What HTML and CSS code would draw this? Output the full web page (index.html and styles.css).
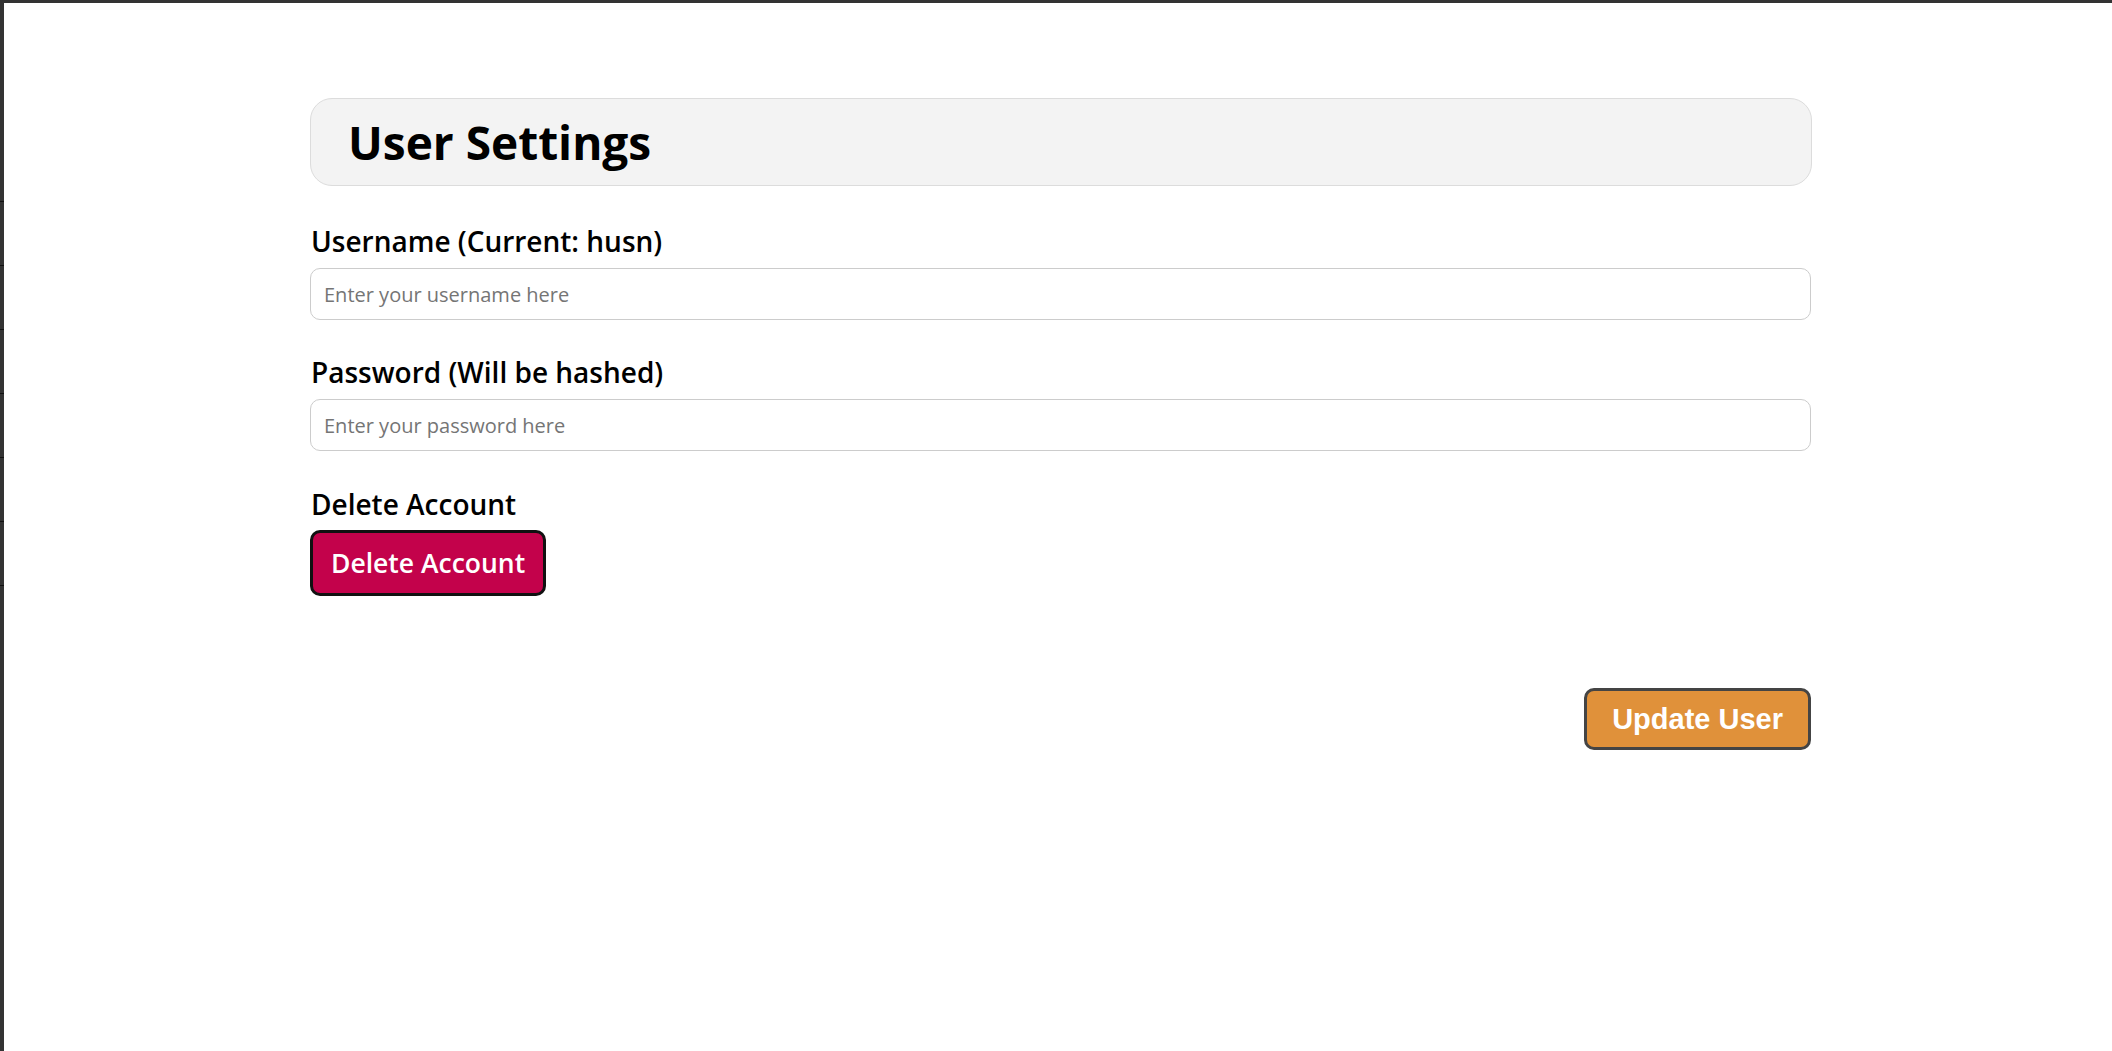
FILE: index.html
```html
<!DOCTYPE html>
<html lang="en">
<head>
<meta charset="utf-8">
<title>User Settings</title>
<link rel="stylesheet" href="styles.css">
</head>
<body>
<div class="window">
  <div class="frame-left"></div>
  <main class="page">
    <div class="settings">
      <header class="settings-header">
        <h1 class="settings-title">User Settings</h1>
      </header>
      <div class="field field-first">
        <label class="field-label" for="username">Username (Current: husn)</label>
        <input class="field-input" id="username" type="text" placeholder="Enter your username here">
      </div>
      <div class="field field-second">
        <label class="field-label" for="password">Password (Will be hashed)</label>
        <input class="field-input" id="password" type="password" placeholder="Enter your password here">
      </div>
      <div class="field field-delete">
        <span class="field-label">Delete Account</span>
        <div><button class="btn-delete" type="button">Delete Account</button></div>
      </div>
      <div class="actions">
        <button class="btn-update" type="button">Update User</button>
      </div>
    </div>
  </main>
</div>
</body>
</html>
```
FILE: styles.css
```css
* { box-sizing: border-box; }
html, body { margin: 0; padding: 0; background: #ffffff; }
body {
  font-family: "Open Sans", "Noto Sans", sans-serif;
  color: #000;
}
.window {
  display: flex;
  min-height: 100vh;
  border-top: 3px solid #333333;
}
.frame-left {
  width: 4px;
  flex: 0 0 4px;
  background-color: #333333;
  background-image: repeating-linear-gradient(to bottom,
    transparent 0, transparent 198px, #111 198px, #111 199px, transparent 199px, transparent 262px,
    #111 262px, #111 263px, transparent 263px, transparent 326px,
    #111 326px, #111 327px, transparent 327px, transparent 390px,
    #111 390px, #111 391px, transparent 391px, transparent 454px,
    #111 454px, #111 455px, transparent 455px, transparent 518px,
    #111 518px, #111 519px, transparent 519px, transparent 582px,
    #111 582px, #111 583px, transparent 583px, transparent 2000px);
}
.page {
  flex: 1;
  padding-top: 95px;
}
.settings {
  width: 1502px;
  margin-left: 306px;
}
.settings-header {
  height: 88px;
  display: flex;
  align-items: center;
  padding-left: 37px;
  background: #f3f3f3;
  border: 1px solid #dcdcdc;
  border-radius: 22px;
}
.settings-title {
  margin: 0;
  font-size: 46px;
  font-weight: 700;
  line-height: 1;
}
.field {
  display: flex;
  flex-direction: column;
  margin-top: 36px;
}
.field-first { margin-top: 39px; }
.field-second { margin-top: 36px; }
.field-label {
  font-size: 28px;
  font-weight: 600;
  line-height: 33px;
  margin-bottom: 10px;
  padding-left: 1px;
}
.field-input {
  width: 1501px;
  height: 52px;
  padding: 0 13px;
  border: 1px solid #cccccc;
  border-radius: 10px;
  font-family: "Open Sans", "Noto Sans", sans-serif;
  font-size: 20px;
  color: #000;
  background: #fff;
  outline: none;
}
.field-input::placeholder { color: #757575; }
.field-delete { margin-top: 37px; }
.field-delete .field-label { margin-bottom: 9px; }
.btn-delete {
  height: 66px;
  padding: 0 18px;
  background: #c3024b;
  color: #ffffff;
  border: 3px solid #111111;
  border-radius: 10px;
  font-family: "Open Sans", "Noto Sans", sans-serif;
  font-size: 26.5px;
  font-weight: 600;
  cursor: pointer;
}
.actions {
  display: flex;
  justify-content: flex-end;
  margin-top: 92px;
  padding-right: 1px;
}
.btn-update {
  height: 62px;
  padding: 0 25px;
  background: #e0913a;
  color: #ffffff;
  border: 3px solid #444444;
  border-radius: 10px;
  font-family: "Liberation Sans", Arial, sans-serif;
  font-size: 29px;
  font-weight: 700;
  cursor: pointer;
}
```
